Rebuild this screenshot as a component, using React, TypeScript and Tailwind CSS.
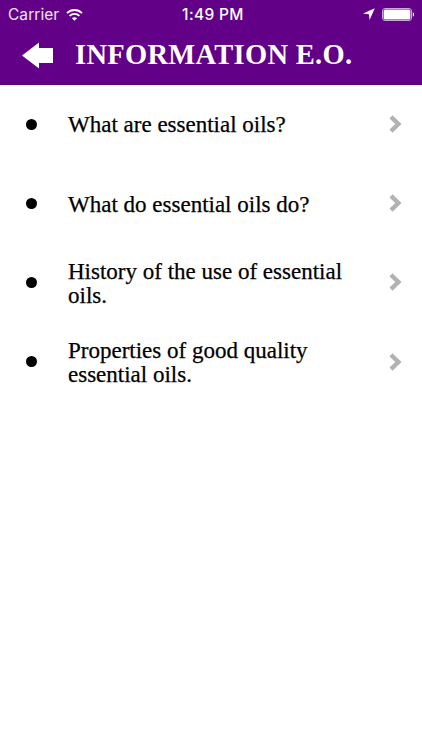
import type React from "react";

interface Topic {
  id: string;
  lines: string[];
}

const topics: Topic[] = [
  { id: "what-are", lines: ["What are essential oils?"] },
  { id: "what-do", lines: ["What do essential oils do?"] },
  { id: "history", lines: ["History of the use of essential", "oils."] },
  { id: "quality", lines: ["Properties of good quality", "essential oils."] },
];

const WifiIcon: React.FC = () => (
  <svg width="17" height="12" viewBox="0 0 17 12" fill="none" stroke="#fff" strokeWidth="1.9">
    <path d="M1 4.2C5.2 0 11.8 0 16 4.2" />
    <path d="M3.6 6.9C6.4 4.2 10.6 4.2 13.4 6.9" />
    <path d="M8.5 11.8 5.9 9.2C7.3 7.8 9.7 7.8 11.1 9.2Z" fill="#fff" stroke="none" />
  </svg>
);

const BatteryIcon: React.FC = () => (
  <svg width="33" height="13" viewBox="0 0 33 13">
    <rect x="0.5" y="0.5" width="29" height="12" rx="2.5" fill="none" stroke="#c9a6dc" />
    <rect x="1.6" y="1.6" width="26.8" height="9.8" rx="1.5" fill="#fff" />
    <path d="M30.8 4.3C32.5 4.9 32.5 8.1 30.8 8.7Z" fill="#fff" />
  </svg>
);

const StatusBar: React.FC = () => (
  <div className="grid h-7 grid-cols-3 items-center pr-[7px] pl-[8px] font-['Inter',sans-serif] text-[15.5px] leading-none text-white">
    <div className="flex items-center gap-[7px] pt-px">
      <span className="tracking-[0.05px] text-white/90">Carrier</span>
      <WifiIcon />
    </div>
    <span className="pt-px pl-[3px] text-center font-medium tracking-[0.35px] whitespace-nowrap">1:49 PM</span>
    <div className="flex items-center justify-end gap-[7px]">
      <svg width="12" height="12" viewBox="0 0 12 12" fill="#fff">
        <path d="M11.8.2 6.6 11.9 5.9 6.2 0 5.6Z" />
      </svg>
      <BatteryIcon />
    </div>
  </div>
);

const TopicRow: React.FC<{ topic: Topic }> = ({ topic }) => (
  <li className="flex h-[79.2px] items-center pr-[20px] pl-[26px]">
    <span className="size-[11px] shrink-0 rounded-full bg-black" />
    <span className="ml-[31px] flex-1 pt-[2.6px] font-['Liberation_Serif',serif] text-[23px] leading-[24px] whitespace-nowrap text-black [-webkit-text-stroke:0.25px_black]">
      {topic.lines.map((line) => (
        <span key={line} className="block">
          {line}
        </span>
      ))}
    </span>
    <svg width="13" height="18" viewBox="0 0 13 18" fill="none" stroke="#b2b2b2" strokeWidth="4.4">
      <path d="M2 1.8 9.4 9 2 16.2" />
    </svg>
  </li>
);

export default function App() {
  return (
    <div className="h-[750px] w-[422px] overflow-hidden bg-white">
      <header className="h-[84.5px] bg-[#620088]">
        <StatusBar />
        <div className="flex h-[54px] items-center pl-[22px]">
          <svg width="31" height="27" viewBox="0 0 31 27" fill="#fff">
            <path d="M0 13.5 17 0.5V6H31V21H17V26.5Z" />
          </svg>
          <h1 className="ml-[22px] font-['Liberation_Serif',serif] text-[28.5px] leading-none font-bold tracking-[0.3px] whitespace-nowrap text-white">
            INFORMATION E.O.
          </h1>
        </div>
      </header>
      <ul>
        {topics.map((topic) => (
          <TopicRow key={topic.id} topic={topic} />
        ))}
      </ul>
    </div>
  );
}
